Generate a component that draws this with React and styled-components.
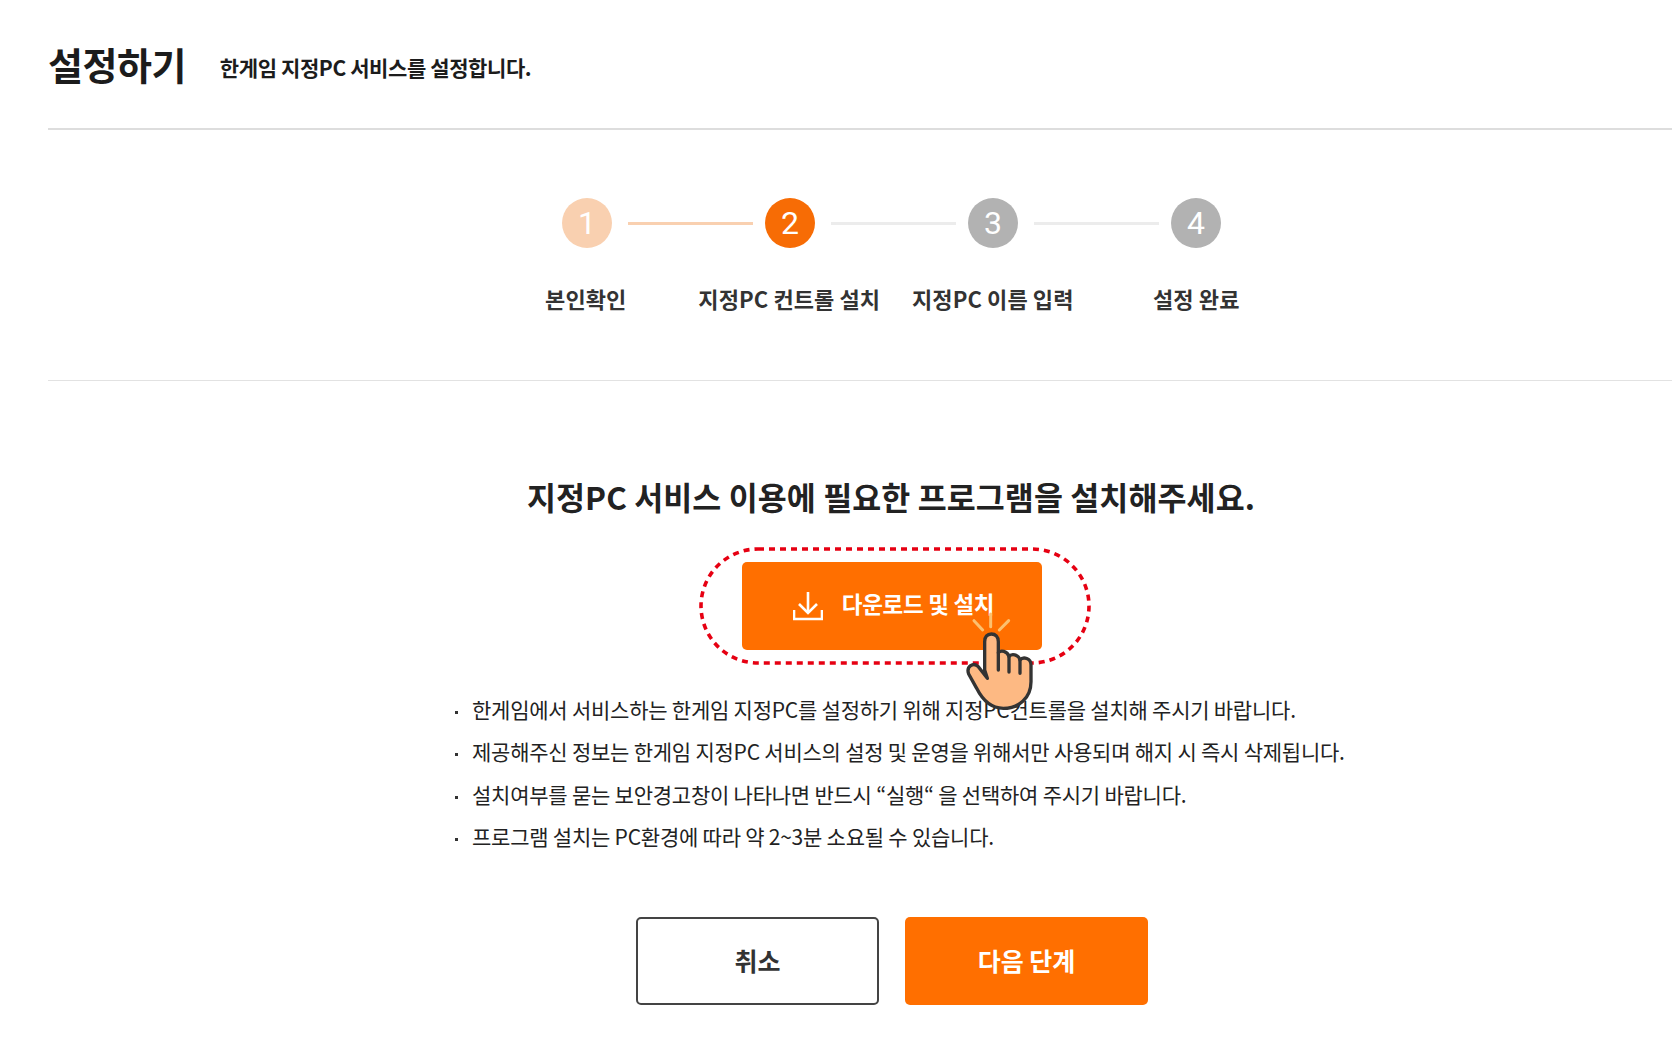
import React from 'react';
import styled, { createGlobalStyle } from 'styled-components';

const GlobalStyle = createGlobalStyle`
  html, body {
    margin: 0;
    padding: 0;
    background: #fff;
    overflow-x: hidden;
  }
  body {
    font-family: "Noto Sans CJK KR", "Noto Sans", sans-serif;
    color: #222;
  }
  * { box-sizing: border-box; }
`;

const Page = styled.div`
  width: 1672px;
  height: 1039px;
  padding-left: 48px;
  overflow: hidden;
`;

const Header = styled.header`
  display: flex;
  align-items: center;
  height: 130px;
  padding-bottom: 1px;
  border-bottom: 2px solid #ddd;
`;

const Title = styled.h1`
  margin: 0 34px 0 0;
  font-size: 38px;
  font-weight: 700;
  line-height: 50px;
  letter-spacing: -0.5px;
  color: #1c1c1c;
`;

const Subtitle = styled.p`
  margin: 6px 0 0;
  font-size: 21px;
  font-weight: 700;
  line-height: 28px;
  letter-spacing: -0.4px;
  color: #1c1c1c;
`;

const StepSection = styled.section`
  height: 251px;
  padding: 68px 0 0 62px;
  border-bottom: 1px solid #e2e2e2;
`;

const CircleRow = styled.div`
  display: flex;
  align-items: center;
  justify-content: center;
  margin-left: 1px;
`;

const Circle = styled.div`
  flex: none;
  display: flex;
  align-items: center;
  justify-content: center;
  width: 50px;
  height: 50px;
  border-radius: 50%;
  background: ${p => p.$tone === 'done' ? '#f9d0b0' : p.$tone === 'active' ? '#f76c05' : '#b2b2b2'};
  color: #fff;
  font-family: Roboto, "Noto Sans", sans-serif;
  font-size: 32px;
  line-height: 1;
`;

const Connector = styled.div`
  flex: none;
  width: 125px;
  height: 3px;
  margin: 0 12px 0 16px;
  background: ${p => p.$done ? '#f9d0b0' : '#ececec'};
`;

const LabelRow = styled.div`
  display: grid;
  grid-template-columns: repeat(4, 203.5px);
  justify-content: center;
  margin-top: 35px;
`;

const StepLabel = styled.div`
  text-align: center;
  font-size: 22px;
  font-weight: 700;
  line-height: 30px;
  letter-spacing: 0.1px;
  white-space: nowrap;
  color: #333;
`;

const Body = styled.main`
  display: flex;
  flex-direction: column;
  align-items: center;
  padding: 95px 0 0 62px;
`;

const Heading = styled.h2`
  margin: 0 0 31px;
  font-size: 31.5px;
  font-weight: 700;
  line-height: 40px;
  letter-spacing: 0.1px;
  color: #222;
`;

const Highlight = styled.div`
  position: relative;
  width: 392px;
  height: 118px;
  margin-left: 8px;
  padding: 15px 43px;
`;

const HighlightRing = styled.svg`
  position: absolute;
  left: 0;
  top: 0;
  width: 392px;
  height: 118px;
`;

const DownloadButton = styled.button`
  position: relative;
  display: flex;
  align-items: center;
  justify-content: center;
  gap: 19px;
  width: 300px;
  height: 88px;
  padding: 0 0 6px 3px;
  border: none;
  border-radius: 5px;
  background: #ff6f00;
  color: #fff;
  font-family: inherit;
  font-size: 22.5px;
  font-weight: 700;
  letter-spacing: -0.3px;
  cursor: pointer;
`;

const DownloadIcon = styled.svg`
  flex: none;
  width: 30px;
  height: 30px;
  margin-top: 5px;
`;

const HandIcon = styled.svg`
  position: absolute;
  left: 251px;
  top: 63px;
  z-index: 2;
  width: 110px;
  height: 110px;
`;

const Notes = styled.ul`
  align-self: flex-start;
  margin: 23px 0 0 343px;
  padding: 0;
  list-style: none;
`;

const Note = styled.li`
  position: relative;
  padding-left: 19px;
  font-size: 21px;
  line-height: 42.3px;
  letter-spacing: -0.23px;
  white-space: nowrap;
  color: #222;
  &::before {
    content: '';
    position: absolute;
    left: 2px;
    top: 23px;
    width: 3px;
    height: 3px;
    background: #333;
  }
`;

const Actions = styled.div`
  display: flex;
  gap: 26px;
  margin: 60px 0 0 2px;
`;

const ActionButton = styled.button`
  width: 243px;
  height: 88px;
  padding: 0 0 2px;
  border: ${p => p.$primary ? 'none' : '2px solid #444'};
  border-radius: 5px;
  background: ${p => p.$primary ? '#ff6f00' : '#fff'};
  color: ${p => p.$primary ? '#fff' : '#333'};
  font-family: inherit;
  font-size: 25px;
  font-weight: 700;
  cursor: pointer;
`;

const steps = [
  { label: '본인확인', tone: 'done' },
  { label: '지정PC 컨트롤 설치', tone: 'active' },
  { label: '지정PC 이름 입력', tone: 'todo' },
  { label: '설정 완료', tone: 'todo' }
];

const notes = [
  '한게임에서 서비스하는 한게임 지정PC를 설정하기 위해 지정PC컨트롤을 설치해 주시기 바랍니다.',
  '제공해주신 정보는 한게임 지정PC 서비스의 설정 및 운영을 위해서만 사용되며 해지 시 즉시 삭제됩니다.',
  '설치여부를 묻는 보안경고창이 나타나면 반드시 “실행“ 을 선택하여 주시기 바랍니다.',
  '프로그램 설치는 PC환경에 따라 약 2~3분 소요될 수 있습니다.'
];

const App = () => (
  <Page>
    <GlobalStyle />
    <Header>
      <Title>설정하기</Title>
      <Subtitle>한게임 지정PC 서비스를 설정합니다.</Subtitle>
    </Header>

    <StepSection>
      <CircleRow>
        {steps.map((step, i) => (
          <React.Fragment key={step.label}>
            {i > 0 && <Connector $done={i === 1} />}
            <Circle $tone={step.tone}>{i + 1}</Circle>
          </React.Fragment>
        ))}
      </CircleRow>
      <LabelRow>
        {steps.map(step => (
          <StepLabel key={step.label}>{step.label}</StepLabel>
        ))}
      </LabelRow>
    </StepSection>

    <Body>
      <Heading>지정PC 서비스 이용에 필요한 프로그램을 설치해주세요.</Heading>
      <Highlight>
        <HighlightRing viewBox="0 0 392 118" fill="none">
          <rect x="2" y="2" width="388" height="114" rx="57" stroke="#e60012" strokeWidth="3.6" strokeDasharray="6 5" />
        </HighlightRing>
        <DownloadButton>
          <DownloadIcon viewBox="1 0 30 30" fill="none" stroke="#fff" strokeWidth="2.6">
            <path d="M16 1V21" />
            <path d="M7 13L16 22L25 13" />
            <path d="M2 19V28H30V19" />
          </DownloadIcon>
          다운로드 및 설치
        </DownloadButton>
        <HandIcon viewBox="0 0 330 330" fill="none">
          <g stroke="#fcc06f" strokeWidth="9" strokeLinecap="round">
            <path d="M72 32L98 60" />
            <path d="M122 12V50" />
            <path d="M176 32L148 60" />
          </g>
          <path
            d="M104 95C104 80 112 72 124 72C136 72 145 80 145 95V128C152 120 172 122 177 140C184 130 205 132 210 150C220 138 243 145 243 165V215C243 265 205 295 160 295C120 295 95 265 80 235L56 192C48 170 70 155 85 170L112 205L104 180Z"
            fill="#fdb983"
            stroke="#333"
            strokeWidth="10"
            strokeLinejoin="round"
          />
          <path d="M145 128V180M177 140V186M210 150V190" stroke="#333" strokeWidth="10" strokeLinecap="round" />
        </HandIcon>
      </Highlight>

      <Notes>
        {notes.map(note => (
          <Note key={note}>{note}</Note>
        ))}
      </Notes>

      <Actions>
        <ActionButton>취소</ActionButton>
        <ActionButton $primary>다음 단계</ActionButton>
      </Actions>
    </Body>
  </Page>
);

export default App;
